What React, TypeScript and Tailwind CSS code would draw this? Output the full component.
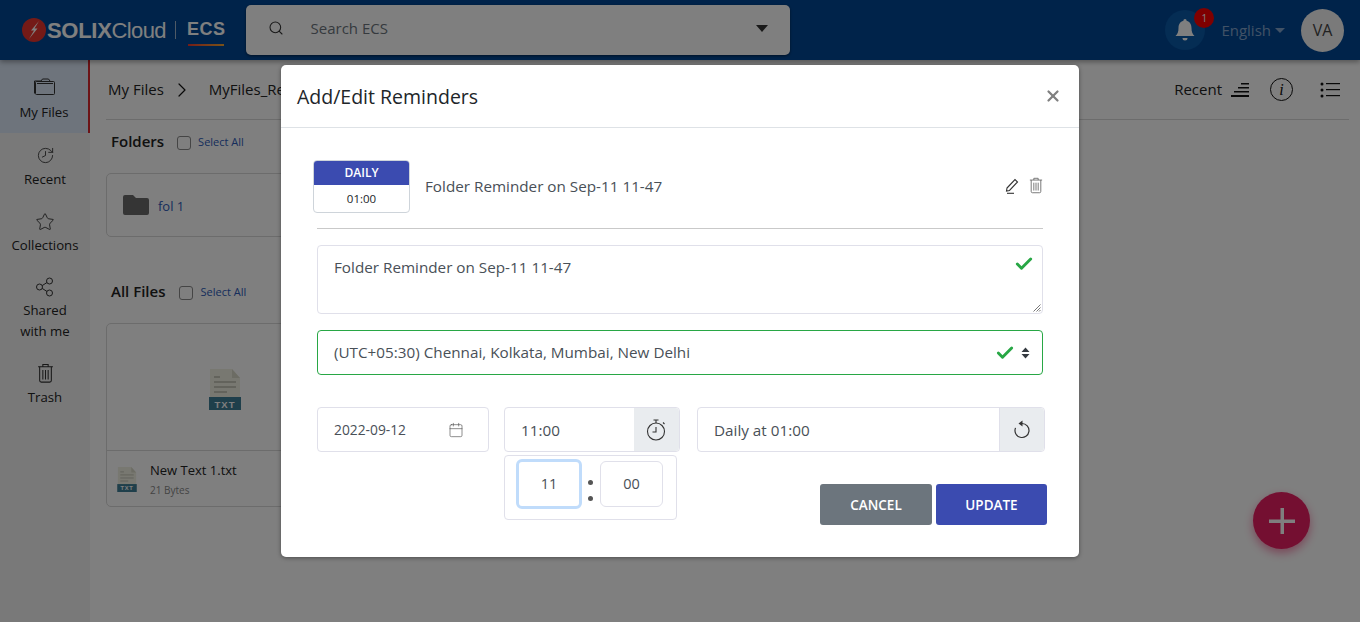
import React from 'react';
import { Calendar, Check, ChevronRight, History, Search, Star, X } from 'lucide-react';

const FONT = "font-['Open_Sans','Noto_Sans',sans-serif]";

const Logo = () => (
  <div className="flex items-center">
    <svg width="24" height="24" viewBox="0 0 24 24" className="mr-[1px]">
      <circle cx="12" cy="12" r="12" fill="#e8352e" />
      <path d="M17 3 L9 12.5 L12 12.5 L7 21 L15.5 10.5 L12.5 10.5 Z" fill="#fff" />
    </svg>
    <span className="text-[22px] font-['Liberation_Sans',sans-serif] font-bold tracking-[-0.3px] text-[#ffffff]">SOLIX</span>
    <span className="text-[22px] font-['Liberation_Sans',sans-serif] tracking-[-0.6px] text-[#ffffff]">Cloud</span>
    <div className="ml-[9px] mr-[11px] h-[18px] w-px bg-[#9fb4cc]" />
    <div className="flex flex-col items-center pt-[3px]">
      <span className="text-[18px] leading-[23px] font-['Liberation_Sans',sans-serif] font-bold tracking-[0.5px] text-[#ffffff]">ECS</span>
      <div className="mt-[3px] h-[2px] w-[36px] bg-gradient-to-r from-[#e8352e] to-[#f2a431]" />
    </div>
  </div>
);

const FolderOutline = () => (
  <svg width="21" height="17" viewBox="0 0 21 17" fill="none" stroke="#333" strokeWidth="1">
    <path d="M.5 15.500V3h6.500l1.500-2h6l1.500 2" />
    <rect x="1.500" y="3.500" width="19" height="13" rx="1" />
    <path d="M3 5.500h16" />
  </svg>
);

const ShareIcon = () => (
  <svg width="20" height="20" viewBox="0 0 20 20" fill="none" stroke="#333" strokeWidth="1">
    <circle cx="14.500" cy="4" r="3" />
    <circle cx="14.500" cy="16" r="3" />
    <circle cx="4.500" cy="10" r="3" />
    <path d="M7.200 8.600 12 5.500M7.200 11.400 12 14.500" />
  </svg>
);

const TrashIcon = ({ size, color }: { size: number; color: string }) => (
  <svg width={size} height={size * 1.15} viewBox="0 0 16 18.400" fill="none" stroke={color} strokeWidth="1">
    <path d="M1 3.500h14M5.500 3.500V1.500h5v2" />
    <path d="M2.500 3.500v13a1.500 1.500 0 0 0 1.500 1.500h8a1.500 1.500 0 0 0 1.500-1.500v-13" />
    <path d="M5.500 6.500v9M8 6.500v9M10.500 6.500v9" />
  </svg>
);

const SideItem = ({
  icon,
  lines,
  active,
  h,
  labelMt = '',
}: {
  icon: React.ReactNode;
  lines: string[];
  active?: boolean;
  h: string;
  labelMt?: string;
}) => (
  <div className={`flex flex-col items-center ${h} ${active ? 'bg-[#dce8f8] border-r-2 border-[#d9262c]' : ''}`}>
    <div className={`flex h-[24px] items-center justify-center ${labelMt}`}>{icon}</div>
    {lines.map((l) => (
      <span key={l} className="text-[13.2px] leading-[21px] text-[#222]">{l}</span>
    ))}
  </div>
);

const TxtIcon = ({ big }: { big?: boolean }) => (
  <svg width={big ? 32 : 20} height={big ? 41 : 25} viewBox="0 0 32 41">
    <path d="M1 0h22l8 9v22H1z" fill="#f0f0e2" />
    <path d="M23 0l8 9h-8z" fill="#d9d9c8" />
    <path d="M5 8h6M5 13h22M5 18h22M5 23h13" stroke="#b9b9ac" strokeWidth="1.300" />
    <rect x="0" y="28" width="32" height="13" fill="#3f7f96" />
    <text x="16" y="38.500" textAnchor="middle" fontSize="9.500" fontWeight="700" letterSpacing="1" fill="#fff" fontFamily="Liberation Sans, sans-serif">TXT</text>
  </svg>
);

const SelectAll = ({ ml }: { ml: string }) => (
  <div className={`flex items-center pt-[2px] ${ml}`}>
    <div className="h-[14px] w-[14px] rounded-[3px] border border-[#8a8a8a] bg-white" />
    <span className="ml-[7px] text-[11px] font-medium text-[#2d5bb8]">Select All</span>
  </div>
);

const Header = () => (
  <header className="relative z-10 flex h-[60px] items-center bg-[#004795] pl-[22px] pr-[16px] shadow-[0_2px_5px_rgba(0,0,0,0.35)]">
    <Logo />
    <div className="ml-[20px] flex h-[50px] w-[544px] items-center rounded-[5px] bg-white pb-[4px] pl-[22px] pr-[22px] shadow-[0_1px_3px_rgba(0,0,0,0.5)]">
      <Search size={16} className="text-[#333]" strokeWidth={1.600} />
      <span className="ml-[27px] flex-1 text-[15px] text-[#6c757d]">Search ECS</span>
      <div className="h-0 w-0 border-x-[6px] border-t-[7px] border-x-transparent border-t-[#333]" />
    </div>
    <div className="ml-auto flex items-center">
      <div className="relative flex h-[40px] w-[40px] items-center justify-center rounded-full bg-[#0a5aa8]">
        <svg width="20" height="24" viewBox="0 0 20 24" fill="#fff">
          <path d="M10 1a1.600 1.600 0 0 1 1.600 1.700C15 3.500 16.500 6.500 16.500 10c0 4 1 6 3 8H.5c2-2 3-4 3-8 0-3.500 1.500-6.500 4.900-7.300A1.600 1.600 0 0 1 10 1zM7.500 20h5a2.500 2.500 0 0 1-5 0z" />
        </svg>
        <div className="absolute right-[-9px] top-[-2px] flex h-[20px] w-[20px] items-center justify-center rounded-full bg-[#ff0000] text-[10px] text-white">1</div>
      </div>
      <span className="ml-[16px] text-[15px] text-[#83a4cc]">English</span>
      <div className="ml-[4px] h-0 w-0 border-x-[5px] border-t-[5px] border-x-transparent border-t-[#83a4cc]" />
      <div className="ml-[16px] flex h-[43px] w-[43px] items-center justify-center rounded-full bg-[#f4f4f4] text-[16px] text-[#444]">VA</div>
    </div>
  </header>
);

const Sidebar = () => (
  <aside className="flex w-[90px] shrink-0 flex-col bg-[#f3f3f3]">
    <SideItem h="h-[73px] pt-[14px]" labelMt="mb-[4px]" active icon={<FolderOutline />} lines={['My Files']} />
    <SideItem h="h-[66px] pt-[10px]" labelMt="mb-[2px]" icon={<History size={19} strokeWidth={1.100} className="-scale-x-100 text-[#333]" />} lines={['Recent']} />
    <SideItem h="h-[66px] pt-[11px]" labelMt="mb-[1px]" icon={<Star size={20} strokeWidth={1.100} className="text-[#333]" />} lines={['Collections']} />
    <SideItem h="h-[96px] pt-[10px]" labelMt="mb-[1px]" icon={<ShareIcon />} lines={['Shared', 'with me']} />
    <SideItem h="h-[60px]" labelMt="mb-[2px]" icon={<TrashIcon size={17} color="#333" />} lines={['Trash']} />
  </aside>
);

const Content = () => (
  <main className="flex-1 pl-[16px] pr-[11px]">
    <div className="flex h-[60px] items-center border-b border-[#d8d8d8] pl-[2px] pr-[9px]">
      <span className="text-[15px] text-[#222]">My Files</span>
      <ChevronRight size={24} strokeWidth={1.200} className="ml-[6px] text-[#111]" />
      <span className="ml-[15px] text-[15px] text-[#222]">MyFiles_Reminders</span>
      <span className="ml-auto text-[15px] text-[#222]">Recent</span>
      <svg width="18" height="14" viewBox="0 0 18 14" className="ml-[9px]" fill="#111">
        <rect x="10" y="0" width="8" height="1.500" />
        <rect x="7" y="4" width="11" height="1.500" />
        <rect x="3" y="8" width="15" height="1.500" />
        <rect x="0" y="12" width="18" height="2" />
      </svg>
      <div className="ml-[21px] flex h-[23px] w-[23px] items-center justify-center rounded-full border-[1.500px] border-[#111] font-['Liberation_Serif',serif] text-[16px] italic text-[#111]">i</div>
      <svg width="20" height="16" viewBox="0 0 20 16" className="ml-[27px]" fill="#111">
        <rect x="6" y="1" width="14" height="1.200" />
        <rect x="6" y="7" width="14" height="1.200" />
        <rect x="6" y="13" width="14" height="1.200" />
        <circle cx="2" cy="2" r="1.500" />
        <circle cx="2" cy="8" r="1.500" />
        <circle cx="2" cy="14" r="1.500" />
      </svg>
    </div>
    <div className="mt-[10px] flex h-[23px] items-center pl-[5px]">
      <span className="text-[15px] font-semibold text-[#222]">Folders</span>
      <SelectAll ml="ml-[13px]" />
    </div>
    <div className="mt-[20px] flex h-[64px] w-[238px] items-center rounded-[5px] border border-[#d8d8d8] pl-[16px]">
      <svg width="26" height="20" viewBox="0 0 26 20" fill="#6b6b6b">
        <path d="M2 0h8l3 3h11a2 2 0 0 1 2 2v13a2 2 0 0 1-2 2H2a2 2 0 0 1-2-2V2a2 2 0 0 1 2-2z" />
      </svg>
      <span className="ml-[9px] pt-[4px] text-[13px] text-[#2d5bb8]">fol 1</span>
    </div>
    <div className="mt-[43px] flex h-[23px] items-center pl-[5px]">
      <span className="text-[15px] font-semibold text-[#222]">All Files</span>
      <SelectAll ml="ml-[14px]" />
    </div>
    <div className="mt-[20px] h-[184px] w-[238px] rounded-[5px] border border-[#d8d8d8]">
      <div className="flex h-[127px] items-center justify-center border-b border-[#d8d8d8] pt-[4px]">
        <TxtIcon big />
      </div>
      <div className="flex items-start pl-[10px] pt-[10px]">
        <div className="pt-[6px]">
          <TxtIcon />
        </div>
        <div className="ml-[13px] flex flex-col">
          <span className="text-[13px] leading-[18px] text-[#222]">New Text 1.txt</span>
          <span className="mt-[4px] text-[10px] leading-[15px] text-[#888]">21 Bytes</span>
        </div>
      </div>
    </div>
  </main>
);

const Fab = () => (
  <div className="absolute left-[1253px] top-[492px] flex h-[57px] w-[57px] items-center justify-center rounded-full bg-[#e91e63] shadow-[0_4px_10px_rgba(233,30,99,0.5)]">
    <svg width="26" height="26" viewBox="0 0 26 26" fill="#fff">
      <rect x="11.500" y="0" width="3.500" height="26" />
      <rect x="0" y="11.500" width="26" height="3.500" />
    </svg>
  </div>
);

const Modal = () => (
  <div className="absolute left-[281px] top-[65px] h-[492px] w-[798px] rounded-[5px] bg-white shadow-[0_1px_4px_rgba(0,0,0,0.4)]">
    <div className="flex h-[63px] items-center justify-between border-b border-[#dee2e6] pl-[16px] pr-[17px]">
      <h2 className="pt-[2px] text-[19.500px] font-medium text-[#212529]">Add/Edit Reminders</h2>
      <X size={18} strokeWidth={3} className="text-[#808080]" />
    </div>

    <div className="pl-[32px] pr-[36px]">
      <div className="mt-[32px] flex items-center">
        <div className="h-[53px] w-[97px] overflow-hidden rounded-[4px] border border-[#ced4da]">
          <div className="mx-[-1px] mt-[-1px] flex h-[25px] items-center justify-center bg-[#3b4bb0] text-[12px] font-semibold text-white">DAILY</div>
          <div className="flex h-[28px] items-center justify-center text-[11.500px] text-[#212529]">01:00</div>
        </div>
        <span className="ml-[15px] text-[15.250px] text-[#495057]">Folder Reminder on Sep-11 11-47</span>
        <svg width="16" height="17" viewBox="0 0 16 17" className="ml-auto mr-[-2px] mt-[-2px]" fill="none" stroke="#333" strokeWidth="1.100">
          <path d="M3 11 11 2.500l2.500 2.500L5.500 13.500 2.500 14z" />
          <path d="M3 16.300h7" />
        </svg>
        <div className="ml-[11px] mt-[-2px]">
          <TrashIcon size={14} color="#666" />
        </div>
      </div>

      <div className="ml-[4px] mt-[15px] w-[726px] border-t border-[#c9c9c9]" />

      <div className="relative ml-[4px] mt-[16px] h-[69px] w-[726px] rounded-[4px] border border-[#e0e0ea] px-[16px] pt-[10px] text-[15.250px] text-[#495057]">
        Folder Reminder on Sep-11 11-47
        <Check size={20} strokeWidth={3.500} className="absolute right-[8px] top-[8px] text-[#28a745]" />
        <svg width="8" height="8" viewBox="0 0 8 8" className="absolute bottom-[1px] right-[1px]" stroke="#555" strokeWidth="0.800">
          <path d="M0.500 7.500 7.500 0.500M3.500 7.500 7.500 3.500M6 7.500 7.500 6" />
        </svg>
      </div>

      <div className="ml-[4px] mt-[16px] flex h-[45px] w-[726px] items-center rounded-[4px] border border-[#28a745] pl-[16px] pr-[12px] text-[15.250px] text-[#495057]">
        <span className="flex-1">(UTC+05:30) Chennai, Kolkata, Mumbai, New Delhi</span>
        <Check size={20} strokeWidth={3.500} className="text-[#28a745]" />
        <svg width="9" height="12" viewBox="0 0 9 12" className="ml-[6px]" fill="#343a40">
          <path d="M4.500 0.500 8.500 5H.5zM.5 7h8l-4 4.500z" />
        </svg>
      </div>

      <div className="ml-[4px] mt-[32px] flex w-[728px]">
        <div className="flex h-[45px] w-[172px] shrink-0 items-center rounded-[4px] border border-[#e0e0ea] pl-[16px] pr-[24px] text-[13.800px] text-[#495057]">
          <span className="flex-1 pt-[2px]">2022-09-12</span>
          <Calendar size={16} strokeWidth={1} className="text-[#555]" />
        </div>
        <div className="relative ml-[15px] flex h-[45px] w-[176px] shrink-0 rounded-[4px] border border-[#e0e0ea] text-[15.250px] text-[#495057]">
          <span className="flex flex-1 items-center pl-[16px] pt-[2px]">11:00</span>
          <div className="flex w-[45px] items-center justify-center rounded-r-[4px] bg-[#e9ecef]">
            <svg width="21" height="22" viewBox="0 0 21 22" fill="none" stroke="#333" strokeWidth="1.100">
              <circle cx="10" cy="12.500" r="8.500" />
              <path d="M7.500 1h5M10 1v3M17 3.500l1.500 1.500" />
              <path d="M10 8v5H6.500" />
            </svg>
          </div>
          <div className="absolute left-[-1px] top-[47px] flex h-[65px] w-[173px] items-start rounded-[4px] border border-[#e0e0ea] bg-white pl-[11px] pt-[3px]">
            <div className="flex h-[50px] w-[66px] shrink-0 items-center justify-center rounded-[6px] border-[3px] border-[#c0dcfb] text-[14.500px]">11</div>
            <div className="ml-[6px] mr-[7px] mt-[21px] flex h-[21px] flex-col justify-between">
              <div className="h-[5px] w-[5px] rounded-full bg-[#555]" />
              <div className="h-[5px] w-[5px] rounded-full bg-[#555]" />
            </div>
            <div className="mt-[2px] flex h-[46px] w-[63px] shrink-0 items-center justify-center rounded-[6px] border border-[#e0e0ea] text-[14.500px]">00</div>
          </div>
        </div>
        <div className="ml-[17px] flex h-[45px] w-[348px] shrink-0 rounded-[4px] border border-[#e0e0ea] text-[15.250px] text-[#495057]">
          <span className="flex flex-1 items-center pl-[16px] pt-[2px]">Daily at 01:00</span>
          <div className="flex w-[45px] items-center justify-center rounded-r-[4px] border-l border-[#e0e0ea] bg-[#e9ecef]">
            <svg width="20" height="20" viewBox="0 0 20 20" fill="none" stroke="#333" strokeWidth="1.200">
              <path d="M10 3.500a7 7 0 1 1-6.500 4.400" />
              <path d="M10.500 0.500v6l-4-3z" fill="#333" stroke="none" />
            </svg>
          </div>
        </div>
      </div>

      <div className="mr-[-4px] mt-[32px] flex justify-end gap-[4px]">
        <button className="h-[41px] w-[112px] rounded-[3px] bg-[#6c757d] pt-[1px] text-[13.500px] font-semibold text-white">CANCEL</button>
        <button className="h-[41px] w-[111px] rounded-[3px] bg-[#3b4bb0] pt-[1px] text-[13.500px] font-semibold text-white">UPDATE</button>
      </div>
    </div>
  </div>
);

export default function App() {
  return (
    <div className={`relative h-[622px] w-[1360px] overflow-hidden bg-white ${FONT}`}>
      <Header />
      <div className="flex h-[562px]">
        <Sidebar />
        <Content />
      </div>
      <Fab />
      <div className="absolute inset-0 z-20 bg-black/50" />
      <div className="absolute inset-0 z-30">
        <Modal />
      </div>
    </div>
  );
}
